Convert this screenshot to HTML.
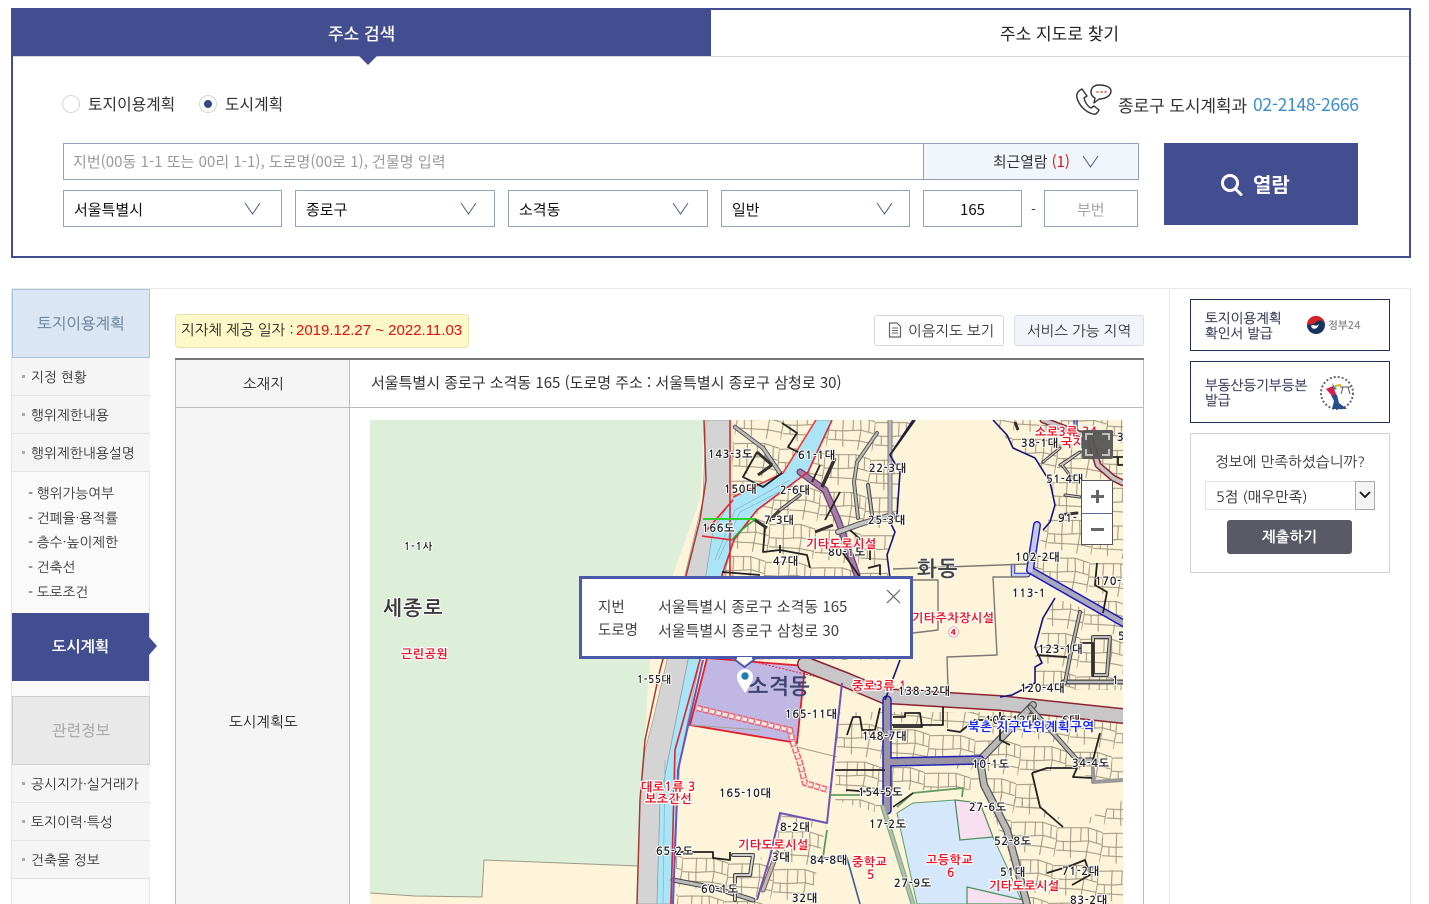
<!DOCTYPE html>
<html lang="ko"><head><meta charset="utf-8"><title>토지이음</title>
<style>
html,body{margin:0;padding:0;background:#fff}
body{width:1429px;height:904px;overflow:hidden;position:relative;font-family:"Noto Sans CJK KR","Liberation Sans",sans-serif;color:#222}
.a{position:absolute;box-sizing:border-box}
.t{position:absolute;white-space:nowrap}
.f{border:1px solid #8fa3bd;background:#fff}
.s{font-family:"NanumGothic","Noto Sans CJK KR",sans-serif}
.mi{position:absolute;left:12px;width:138px;height:38px;background:#f5f5f5;border-bottom:1px solid #e2e2e2;box-sizing:border-box;font:13.8px/39px "NanumGothic",sans-serif;color:#333;padding-left:19px;white-space:nowrap}
.mi:before{content:"";position:absolute;left:10px;top:17px;width:3px;height:3px;background:#aaa}
.su{position:absolute;left:28px;font:13.7px/20px "NanumGothic",sans-serif;color:#333;white-space:nowrap}
svg text{font-family:"NanumGothic","Noto Sans CJK KR",sans-serif;paint-order:stroke;stroke-linejoin:round}
.n{font-size:11px;font-weight:700;fill:#222;stroke:#fff;stroke-width:2px;letter-spacing:.7px}
.r{font-size:12px;font-weight:700;fill:#ee1122;stroke:#fff;stroke-width:2.5px;letter-spacing:.5px}
.b{font-size:12px;font-weight:700;fill:#1122ee;stroke:#fff;stroke-width:2.5px;letter-spacing:.5px}
</style></head><body>

<!-- search box -->
<div class="a" style="left:11px;top:8px;width:1400px;height:250px;border:2px solid #434e91"></div>
<div class="a" style="left:11px;top:8px;width:700px;height:48px;background:#434e91"></div>
<div class="a" style="left:711px;top:56px;width:698px;height:1px;background:#d4d4d4"></div>
<div class="a" style="left:13px;top:56px;width:698px;height:1px;background:#d4d4d4"></div>
<svg class="a" style="left:359px;top:56px" width="18" height="10"><path d="M0 0H18L9 9Z" fill="#434e91"/></svg>
<div class="t" style="left:328px;top:21px;font-size:17px;line-height:24px;color:#fff;font-weight:500">주소 검색</div>
<div class="t" style="left:1000px;top:21px;font-size:17px;line-height:24px;color:#222">주소 지도로 찾기</div>

<svg class="a" style="left:60px;top:92px" width="160" height="24"><circle cx="11" cy="12" r="8.500" fill="#fff" stroke="#d6d6d6"/><circle cx="148" cy="12" r="8.500" fill="#fff" stroke="#d6d6d6"/><circle cx="148" cy="12" r="4" fill="#2f4b85"/></svg>
<div class="t" style="left:88px;top:93px;font-size:15.800px;line-height:22px;color:#333">토지이용계획</div>
<div class="t" style="left:225px;top:93px;font-size:15.800px;line-height:22px;color:#333">도시계획</div>

<svg class="a" style="left:1074px;top:83px" width="40" height="34" fill="none" stroke="#333" stroke-width="1.400" stroke-linecap="round" stroke-linejoin="round">
<path d="M8 6C4 8 2 11 3 15C5 22 11 29 19 31C22 32 24 29 25 27L20 23L17 25C13 23 11 19 10 15L13 13L8 6Z"/>
<path d="M25 2C20 2 17 5 17 9C17 12 19 14 21 15L20 20L25 16C31 16 37 13 37 8C37 4 31 2 25 2Z"/>
<path d="M23 9h1M27 9h1M31 9h1" stroke="#e0553a" stroke-width="1.600"/></svg>
<div class="t" style="left:1118px;top:92px;font-size:17px;line-height:25px;color:#333;letter-spacing:-.1px">종로구 도시계획과</div>
<div class="t" style="left:1253px;top:92px;font-size:17.500px;line-height:25px;color:#3b8ccb;letter-spacing:-.3px">02-2148-2666</div>

<div class="a f" style="left:63px;top:143px;width:1076px;height:37px"></div>
<div class="a" style="left:923px;top:143px;width:216px;height:37px;background:#f1f6fc;border:1px solid #8fa3bd"></div>
<div class="t" style="left:73px;top:151px;font-size:15px;line-height:22px;color:#9a9a9a;letter-spacing:.03px">지번(00동 1-1 또는 00리 1-1), 도로명(00로 1), 건물명 입력</div>
<div class="t" style="left:993px;top:151px;font-size:14.800px;line-height:22px;color:#333">최근열람 <span style="color:#d11">(1)</span></div>

<div class="a f" style="left:63px;top:190px;width:219px;height:37px"></div>
<div class="a f" style="left:295px;top:190px;width:200px;height:37px"></div>
<div class="a f" style="left:508px;top:190px;width:200px;height:37px"></div>
<div class="a f" style="left:721px;top:190px;width:189px;height:37px"></div>
<div class="a f" style="left:923px;top:190px;width:99px;height:37px"></div>
<div class="a f" style="left:1044px;top:190px;width:94px;height:37px"></div>
<div class="t" style="left:74px;top:199px;font-size:15px;line-height:22px;color:#111">서울특별시</div>
<div class="t" style="left:306px;top:199px;font-size:15px;line-height:22px;color:#111">종로구</div>
<div class="t" style="left:519px;top:199px;font-size:15px;line-height:22px;color:#111">소격동</div>
<div class="t" style="left:732px;top:199px;font-size:15px;line-height:22px;color:#111">일반</div>
<div class="t" style="left:960px;top:199px;font-size:15px;line-height:22px;color:#111">165</div>
<div class="t" style="left:1031px;top:199px;font-size:14px;line-height:22px;color:#444">-</div>
<div class="t" style="left:1077px;top:199px;font-size:15px;line-height:22px;color:#a5a5a5">부번</div>
<svg class="a" style="left:0;top:0" width="1429" height="240" fill="none" stroke="#4a5d7c" stroke-width="1"><path d="M245 203l7.500 11 7.500-11M461 203l7.500 11 7.500-11M673 203l7.500 11 7.500-11M877 203l7.500 11 7.500-11M1083 156l7.500 11 7.500-11"/></svg>

<div class="a" style="left:1164px;top:143px;width:194px;height:82px;background:#434e91"></div>
<svg class="a" style="left:1219px;top:172px" width="26" height="26" fill="none" stroke="#fff" stroke-width="3" stroke-linecap="round"><circle cx="11" cy="11" r="7.500"/><path d="M16.500 17l5.500 5.500"/></svg>
<div class="t" style="left:1253px;top:170px;font-size:20px;line-height:28px;color:#fff;font-weight:700">열람</div>

<!-- frame -->
<div class="a" style="left:12px;top:288px;width:1399px;height:1px;background:#e8e8e8"></div>
<div class="a" style="left:1169px;top:288px;width:1px;height:616px;background:#e8e8e8"></div>
<div class="a" style="left:1410px;top:288px;width:1px;height:616px;background:#e8e8e8"></div>

<!-- sidebar -->
<div class="a" style="left:11px;top:289px;width:1px;height:615px;background:#e4e4e4"></div>
<div class="a" style="left:12px;top:289px;width:138px;height:615px;background:#fafafa;border-right:1px solid #e4e4e4"></div>
<div class="a s" style="left:12px;top:289px;width:138px;height:69px;background:#dae6f3;border:1px solid #a9c4e0;text-align:center;font-size:15.500px;line-height:69px;color:#6d88a3;-webkit-text-stroke:.2px #6d88a3">토지이용계획</div>
<div class="mi" style="top:358px">지정 현황</div>
<div class="mi" style="top:396px">행위제한내용</div>
<div class="mi" style="top:434px">행위제한내용설명</div>
<div class="su" style="top:483px">- 행위가능여부</div>
<div class="su" style="top:508px">- 건폐율·용적률</div>
<div class="su" style="top:532px">- 층수·높이제한</div>
<div class="su" style="top:557px">- 건축선</div>
<div class="su" style="top:582px">- 도로조건</div>
<div class="a s" style="left:12px;top:613px;width:137px;height:68px;background:#434e91;text-align:center;font-size:15.200px;line-height:69px;color:#fff;font-weight:700">도시계획</div>
<svg class="a" style="left:149px;top:636px" width="10" height="20"><path d="M0 1L8 10L0 19Z" fill="#434e91"/></svg>
<div class="a s" style="left:12px;top:696px;width:138px;height:69px;background:#e9e9e9;border:1px solid #cfcfcf;text-align:center;font-size:15.500px;line-height:69px;color:#a9a9a9;-webkit-text-stroke:.2px #a9a9a9">관련정보</div>
<div class="mi" style="top:765px">공시지가·실거래가</div>
<div class="mi" style="top:803px">토지이력·특성</div>
<div class="mi" style="top:841px">건축물 정보</div>

<!-- content head -->
<div class="a s" style="left:175px;top:314px;width:294px;height:34px;background:#fff8c9;border:1px solid #e9dfa8;border-radius:4px"></div>
<div class="t s" style="left:181px;top:320px;font-size:14.600px;line-height:22px;color:#222">지자체 제공 일자 :</div>
<div class="t" style="left:296px;top:320px;font:15px/22px 'Liberation Sans',sans-serif;color:#e01010">2019.12.27 ~ 2022.11.03</div>
<div class="a" style="left:874px;top:315px;width:130px;height:31px;border:1px solid #d6d6d6;border-radius:3px;background:#fff"></div>
<svg class="a" style="left:888px;top:322px" width="14" height="16" fill="none" stroke="#666" stroke-width="1.200"><path d="M1.500 1H9L12.500 4.500V15H1.500Z"/><path d="M4 6h6M4 8.500h6M4 11h6" stroke-width="1"/></svg>
<div class="t s" style="left:908px;top:321px;font-size:14.600px;line-height:22px;color:#333">이음지도 보기</div>
<div class="a s" style="left:1014px;top:315px;width:130px;height:31px;border:1px solid #d6dde6;border-radius:3px;background:#f1f5fb;font-size:14.600px;line-height:32px;color:#333;text-align:center">서비스 가능 지역</div>

<!-- table -->
<div class="a" style="left:175px;top:358px;width:969px;height:2px;background:#777"></div>
<div class="a" style="left:175px;top:360px;width:175px;height:544px;background:#f5f5f5;border-left:1px solid #bbb;border-right:1px solid #bbb"></div>
<div class="a" style="left:1143px;top:360px;width:1px;height:544px;background:#bbb"></div>
<div class="a" style="left:175px;top:407px;width:969px;height:1px;background:#bbb"></div>
<div class="t s" style="left:243px;top:374px;font-size:14.500px;line-height:22px;color:#222">소재지</div>
<div class="t s" style="left:229px;top:712px;font-size:14.600px;line-height:22px;color:#222">도시계획도</div>
<div class="t" style="left:371px;top:372px;font-size:15px;line-height:22px;color:#333">서울특별시 종로구 소격동 165 (도로명 주소 : 서울특별시 종로구 삼청로 30)</div>

<!-- map -->
<svg class="a" style="left:370px;top:420px" width="753" height="484" viewBox="370 420 753 484">
<defs>
<pattern id="m" width="46" height="38" patternUnits="userSpaceOnUse" patternTransform="rotate(7)">
<path d="M0 9L14 7L15 21L1 22ZM14 7L31 5L33 18L15 21ZM31 5L46 8M33 18L46 20M15 21L17 37M33 18L32 38M1 22L0 38M2 31L32 29M32 29L46 30M24 6L25 19M40 7L41 19M8 22L9 31" fill="none" stroke="#9c9380" stroke-width="1"/>
</pattern>
</defs>
<rect x="370" y="420" width="753" height="484" fill="#fef4d9"/>
<path d="M370 420H705L700 500L672 577L650 660L645 730L640 800L638 866L484 860L482 897L415 896L370 893Z" fill="#ddeed9"/>
<path d="M638 866L484 860L482 897L415 896L370 893" fill="none" stroke="#9c9a86"/>

<!-- mesh zones -->
<g fill="url(#m)">
<path d="M733 420H815L786 470L735 500L730 530Z"/>
<path d="M832 420H913L890 455L900 472L897 515L890 522L895 532L887 555L892 660H690L712 575L732 535L750 510L805 470Z"/>
<path d="M993 420H1123V623L1033 572L1043 530L1055 505L1050 482L1035 458L1013 448Z"/>
<path d="M1055 598L1123 623V690H1035L1035 650Z"/>
<path d="M838 712H1123V780L1093 783L1077 767L1032 773L1040 807L1075 825L980 790H890L885 815L835 800Z"/>
<path d="M985 790L1040 807L1075 825L1123 800V904H1025Z"/>
<path d="M676 855L770 858L780 813L826 825L810 904H676Z"/>
</g>

<!-- gray road + river -->
<path d="M706 420L703 500L685 575L667 660L653 720L645 750L640 800L637 904H657L660 800L672 740L688 660L700 605L712 560L730 510L730 420Z" fill="#d5d4d4" stroke="#a09a90" stroke-width=".7"/>
<path d="M816 420H832L808 472L755 512L734 538L724 575L700 660L680 760L672 904H657L660 800L672 740L688 660L706 575L713 530L733 498L783 473Z" fill="#a9e5f6" stroke="#8c9aa8" stroke-width=".7"/>
<path d="M665 760L663 904M679 770L670 904M715 560L735 510L790 480M718 560L740 512L795 484" stroke="#7fb5c8" stroke-width=".7" fill="none"/>

<!-- school -->
<path d="M897 813L913 803L955 800L960 840L993 837L1007 867L1023 904H917Z" fill="#d5e7fa" stroke="#5d9a68" stroke-width="1"/>
<path d="M955 800L980 803L993 837L960 840Z" fill="#f9e0f1" stroke="#4a8f58" stroke-width="1.200"/>
<path d="M967 887L993 893L1023 900V904H967Z" fill="#f9e0f1" stroke="#4a8f58" stroke-width="1.200"/>

<!-- selected parcel -->
<path d="M707 658L805 666L797 743L690 725Z" fill="#c0b8e2" stroke="#e01f2f" stroke-width="1.800"/>
<path d="M805 666L842 683M755 662L842 683" stroke="#e01f2f" stroke-width="1" stroke-dasharray="2 1.500" fill="none"/>
<path d="M797 747L837 757M690 725L760 730" stroke="#a89f8b" fill="none"/>
<path d="M697 708L790 730L793 743L800 763L805 783L828 790" fill="none" stroke="#ea6676" stroke-width="6.500" stroke-dasharray="5.500 1.200"/>
<path d="M697 708L790 730L793 743L800 763L805 783L828 790" fill="none" stroke="#fbe9dc" stroke-width="3.500" stroke-dasharray="4.500 2.200"/>

<!-- roads -->
<g fill="none" stroke-linejoin="round" stroke-linecap="round">
<path d="M805 664L846 680L884 696L1000 703L1123 716" stroke="#8c2334" stroke-width="16"/>
<path d="M805 664L846 680L884 696L1000 703L1123 716" stroke="#c8c6c6" stroke-width="13"/>
<path d="M1033 705L980 760L984 785L1007 830L1027 904" stroke="#555" stroke-width="8"/>
<path d="M1033 705L980 760L984 785L1007 830L1027 904" stroke="#b9b9b9" stroke-width="5.500"/>
<path d="M1030 707L1077 760H1093" stroke="#444" stroke-width="5"/><path d="M1030 707L1077 760H1093" stroke="#b5b5b5" stroke-width="3"/>
<path d="M1093 762V782L1123 780" stroke="#999" stroke-width="4"/>
<path d="M1063 682H1123" stroke="#444" stroke-width="5"/><path d="M1063 682H1123" stroke="#bbb" stroke-width="2.500"/>
<path d="M887 700V810M887 762L980 760" stroke="#2020b8" stroke-width="9.500" stroke-dasharray="2 .6"/>
<path d="M887 700V810M887 762L980 760" stroke="#9a94a4" stroke-width="6.500"/>
<path d="M883 807L913 904" stroke="#7fb07f" stroke-width="5"/><path d="M883 807L913 904" stroke="#bbb" stroke-width="2.500"/>
<path d="M800 472L825 490L838 520L857 575" stroke="#6d3f74" stroke-width="7"/><path d="M800 472L825 490L838 520L857 575" stroke="#a57ea8" stroke-width="4.500"/>
<path d="M838 532L860 524L892 515" stroke="#555" stroke-width="6"/><path d="M838 532L860 524L892 515" stroke="#c4c4c4" stroke-width="4"/>
<path d="M890 420V515" stroke="#777" stroke-width="5"/><path d="M890 420V515" stroke="#b9b9b9" stroke-width="3"/>
<path d="M735 427L763 448L780 473" stroke="#555" stroke-width="4.500"/><path d="M735 427L763 448L780 473" stroke="#bbb" stroke-width="2.500"/>
<path d="M877 433L857 462L854 482L858 518" stroke="#555" stroke-width="4"/><path d="M877 433L857 462L854 482L858 518" stroke="#bbb" stroke-width="2"/>
<path d="M868 485L872 515" stroke="#444" stroke-width="4"/><path d="M868 485L872 515" stroke="#bbb" stroke-width="2"/>
<path d="M800 495L780 510L770 520" stroke="#444" stroke-width="3.500"/><path d="M800 495L780 510" stroke="#bbb" stroke-width="1.500"/>
<path d="M1037 525L1030 570L1123 623" stroke="#1c1cc0" stroke-width="8" stroke-dasharray="1.800 .7"/>
<path d="M1037 525L1030 570L1123 623" stroke="#a9a9b9" stroke-width="5"/>
<path d="M1037 525L1030 570" stroke="#c5c9ea" stroke-width="5"/>
<path d="M1013 566V575H1028" stroke="#2233bb" stroke-width="4.500"/><path d="M1013 566V575H1028" stroke="#c5c9ea" stroke-width="2.500"/>
<path d="M1043 420L1090 438L1098 465L1113 478L1123 483" stroke="#8c2334" stroke-width="7"/><path d="M1043 420L1090 438L1098 465L1113 478L1123 483" stroke="#c5c3c3" stroke-width="4"/>
<path d="M1043 462L1060 448M1060 465L1080 452L1062 465L1072 478M1065 495L1080 497M1060 515L1077 513" stroke="#333" stroke-width="3"/>
<path d="M1043 462L1060 448M1060 465L1080 452L1062 465L1072 478M1065 495L1080 497" stroke="#ccc" stroke-width="1.200"/>
<path d="M1080 612L1070 657L1065 683" stroke="#444" stroke-width="4"/><path d="M1080 612L1070 657L1065 683" stroke="#bbb" stroke-width="2"/>
<path d="M1093 637H1110L1107 675H1093Z" stroke="#444" stroke-width="4"/><path d="M1093 637H1110L1107 675H1093Z" stroke="#bbb" stroke-width="2"/>
<path d="M673 880L715 888L753 900" stroke="#444" stroke-width="5"/><path d="M673 880L715 888L753 900" stroke="#bbb" stroke-width="3"/>
<path d="M777 853L763 890" stroke="#854" stroke-width="5"/><path d="M777 853L763 890" stroke="#bbb" stroke-width="3"/>
<path d="M733 855H753L750 875H735V900" stroke="#444" stroke-width="4"/><path d="M733 855H753L750 875H735V900" stroke="#ddd" stroke-width="1.800"/>
</g>

<!-- thin lines -->
<g fill="none" stroke-width="1.600" stroke-linejoin="round">
<path d="M730 420V585M702 536L732 540M705 532L733 500" stroke="#e8242c"/>
<path d="M704 420L706 480L700 520L685 580L660 670L645 740L640 800L637 904" stroke="#a63b33" stroke-width="1.500"/>
<path d="M832 420L808 472L757 510L734 540L722 575L700 660L675 750L671 904" stroke="#d82838"/>
<path d="M816 420L783 473L733 497" stroke="#ee3838"/>
<path d="M703 519H756" stroke="#2ed12e" stroke-width="2"/>
<path d="M756 519Q740 530 732 540" stroke="#2ea02e"/>
<path d="M842 683L827 823L780 813L770 857L757 900M703 660L678 770L673 904" stroke="#6e55b5" stroke-width="2"/>
<path d="M913 420L890 455L900 472L897 515L890 522L895 532L887 555L890 578M900 660L885 700" stroke="#141478"/>
<path d="M993 420L1007 435L1013 448L1035 458L1050 482L1055 505L1050 522L1043 530M1055 598L1043 618L1035 647L1042 663L1035 667V683L1012 695L1000 697" stroke="#141478"/>
<path d="M1074 420V435M1077 420V435" stroke="#2233bb" stroke-width="1.200"/>
<path d="M893 569L1027 564M913 580H938V630L913 633M1027 577H993L997 655L947 657L948 687" stroke="#7a7a76" stroke-width="1.400"/>
<path d="M830 795H863M897 807L913 793L963 788L962 797M827 830L823 857" stroke="#5f9a5f" stroke-width="1.800"/>
<path d="M893 807L913 793" stroke="#222" stroke-width="1.500"/>
<path d="M823 858H847L860 904" stroke="#3c5e96" stroke-width="1.600"/>
<path d="M757 452L743 477L763 487L782 473M782 423L797 433L788 447L800 453M835 458L822 487M820 465L812 482M765 528L763 552L780 550L807 555L810 568M780 545V553M850 530L870 548V560M868 568L880 565V575M722 572L760 575M1097 563L1095 585L1107 592L1103 613M1037 655L1067 657M1080 643H1093V677M847 735L853 717H860L862 730H875L880 708M893 717H905V713H920L922 727H893M892 725H943V707M947 730L960 732L975 720H1000M1032 773L1047 768H1077L1073 777L1092 778M1032 773L1040 807L1063 827M1100 733L1093 760M1000 712V740L1010 745M675 852H713V858L730 860V852M840 492L825 520M838 546L862 580M1113 457H1123M1118 457V465H1123M1015 422L1018 430M915 420L890 455M835 770H885M846 790L885 793M1047 873L1070 866L1085 860L1090 875L1072 885" stroke="#222" stroke-width="1.800"/>
<path d="M757 452L772 465M758 475L772 465M755 520L767 528M815 532L833 525M1015 422L1018 430" stroke="#333" stroke-width="3"/>
<path d="M835 458L822 487" stroke="#333" stroke-width="3.500"/>
</g>

<!-- labels -->
<text x="404" y="550" class="n" style="font-size:10px;letter-spacing:1px">1-1사</text>
<text x="383" y="615" font-size="20" font-weight="700" fill="#3a3a3a" stroke="#fff" stroke-width="2" letter-spacing="1.500">세종로</text>
<text x="401" y="658" class="r">근린공원</text>
<text x="637" y="683" class="n" style="font-size:10px">1-55대</text>
<text x="708" y="458" class="n">143-3도</text>
<text x="798" y="459" class="n">61-1대</text>
<text x="869" y="472" class="n">22-3대</text>
<text x="724" y="493" class="n">150대</text>
<text x="780" y="494" class="n">2-6대</text>
<text x="702" y="532" class="n">166도</text>
<text x="764" y="524" class="n">7-3대</text>
<text x="868" y="524" class="n">25-3대</text>
<text x="773" y="565" class="n">47대</text>
<text x="828" y="556" class="n">80-1도</text>
<text x="806" y="548" class="r">기타도로시설</text>
<text x="917" y="576" font-size="21" font-weight="700" fill="#444" stroke="#fff" stroke-width="1.500" letter-spacing="1">화동</text>
<text x="1015" y="561" class="n">102-2대</text>
<text x="1012" y="597" class="n">113-1</text>
<text x="1095" y="585" class="n">170-3</text>
<text x="1038" y="653" class="n">123-1대</text>
<text x="1020" y="692" class="n">120-4대</text>
<text x="1046" y="483" class="n">51-4대</text>
<text x="1021" y="447" class="n">38-1대</text>
<text x="1058" y="522" class="n">91-</text>
<text x="1117" y="441" class="n">3</text>
<text x="1035" y="436" class="r">소로3류 34</text>
<text x="1061" y="447" class="r">국지</text>
<text x="912" y="622" class="r">기타주차장시설</text>
<text x="948" y="636" class="r" style="font-size:11px">④</text>
<text x="852" y="690" class="r">중로3류 1</text>
<text x="898" y="695" class="n">138-32대</text>
<text x="985" y="724" class="n">106-12대</text>
<text x="1062" y="724" class="n">6대</text>
<text x="968" y="731" class="b" style="font-size:12.500px">북촌 지구단위계획구역</text>
<text x="785" y="718" class="n">165-11대</text>
<text x="862" y="740" class="n">148-7대</text>
<text x="972" y="768" class="n">10-1도</text>
<text x="1072" y="767" class="n">34-4도</text>
<text x="858" y="796" class="n">154-5도</text>
<text x="719" y="797" class="n">165-10대</text>
<text x="969" y="811" class="n">27-6도</text>
<text x="869" y="828" class="n">17-2도</text>
<text x="994" y="845" class="n">52-8도</text>
<text x="641" y="791" class="r">대로1류 3</text>
<text x="645" y="803" class="r">보조간선</text>
<text x="780" y="831" class="n">8-2대</text>
<text x="656" y="855" class="n">65-2도</text>
<text x="738" y="849" class="r">기타도로시설</text>
<text x="772" y="861" class="n">3대</text>
<text x="810" y="864" class="n">84-8대</text>
<text x="852" y="866" class="r">중학교</text>
<text x="867" y="879" class="r">5</text>
<text x="926" y="864" class="r">고등학교</text>
<text x="947" y="877" class="r">6</text>
<text x="894" y="887" class="n">27-9도</text>
<text x="1000" y="876" class="n">51대</text>
<text x="1062" y="875" class="n">71-2대</text>
<text x="989" y="890" class="r">기타도로시설</text>
<text x="701" y="893" class="n">60-1도</text>
<text x="792" y="902" class="n">32대</text>
<text x="1070" y="904" class="n">83-2대</text>
<text x="1112" y="684" class="n">1</text>
<text x="1118" y="640" class="n">5</text>
</svg>

<!-- map controls -->
<div class="a" style="left:1082px;top:430px;width:31px;height:29px;background:#555;border-radius:2px;opacity:.95"></div>
<svg class="a" style="left:1082px;top:430px" width="31" height="29" fill="none" stroke="#ccc" stroke-width="1.800"><path d="M4 10V4H11M20 4H27V10M27 19V25H20M11 25H4V19"/></svg>
<div class="a" style="left:1081px;top:480px;width:32px;height:65px;background:#fff;border:1px solid #555"></div>
<div class="a" style="left:1082px;top:513px;width:30px;height:1px;background:#5a6a96"></div>
<svg class="a" style="left:1081px;top:480px" width="32" height="65" fill="#666"><rect x="10" y="15" width="13" height="3"/><rect x="15" y="10" width="3" height="13"/><rect x="10" y="48" width="13" height="3"/></svg>

<!-- popup -->
<div class="a" style="left:579px;top:576px;width:334px;height:83px;background:#fff;border:3px solid #4a59a9"></div>
<svg class="a" style="left:733px;top:657px" width="24" height="12"><path d="M1 2L11.500 10L22 2" fill="#fff" stroke="#4a59a9" stroke-width="2"/><rect x="4" y="0" width="15" height="2.500" fill="#fff"/></svg>
<div class="t" style="left:598px;top:597px;font-size:14.500px;line-height:20px;color:#444">지번</div>
<div class="t" style="left:598px;top:620px;font-size:14.500px;line-height:20px;color:#444">도로명</div>
<div class="t" style="left:658px;top:597px;font-size:15px;line-height:20px;color:#444">서울특별시 종로구 소격동 165</div>
<div class="t" style="left:658px;top:621px;font-size:15px;line-height:20px;color:#444">서울특별시 종로구 삼청로 30</div>
<svg class="a" style="left:885px;top:588px" width="17" height="17" stroke="#666" stroke-width="1.200"><path d="M2 2L15 15M15 2L2 15"/></svg>
<svg class="a" style="left:736px;top:668px" width="18" height="26"><path d="M9 25C5 18 1 14 1 9A8 8 0 0 1 17 9C17 14 13 18 9 25Z" fill="#fff"/><circle cx="9" cy="8" r="3.700" fill="#1f7fb5"/></svg>
<div class="t" style="left:748px;top:674px;font-size:21.500px;line-height:28px;font-weight:700;color:#3e4370;font-family:'NanumGothic',sans-serif;letter-spacing:.5px">소격동</div>

<!-- right column -->
<div class="a" style="left:1190px;top:299px;width:200px;height:52px;border:1px solid #1f3158"></div>
<div class="t s" style="left:1205px;top:311px;font-size:13.600px;line-height:15px;color:#3a3a5a;-webkit-text-stroke:.2px #3a3a5a">토지이용계획<br>확인서 발급</div>
<svg class="a" style="left:1306px;top:315px" width="20" height="20"><circle cx="10" cy="10" r="9" fill="#17335f"/><path d="M1 10A9 9 0 0 1 19 10C18 5 13 4 10 7C7 10 3 9 1 10Z" fill="#d8222a"/><path d="M5 11C7 8 10 13 13 9C12 13 9 15 6 13Z" fill="#fff"/></svg>
<div class="t s" style="left:1328px;top:319px;font-size:10.500px;line-height:14px;color:#8a8a8a;font-weight:700">정부24</div>

<div class="a" style="left:1190px;top:361px;width:200px;height:62px;border:1px solid #1f3158"></div>
<div class="t s" style="left:1205px;top:378px;font-size:13.600px;line-height:15px;color:#3a3a5a;-webkit-text-stroke:.2px #3a3a5a">부동산등기부등본<br>발급</div>
<svg class="a" style="left:1319px;top:375px" width="38" height="36"><circle cx="18" cy="18" r="16" fill="none" stroke="#666" stroke-width="2" stroke-dasharray="2 2"/><path d="M12 15L18 20L20 28L28 34H13L15 26L12 20Z" fill="#254e8c"/><path d="M7 14L14 11L17 19L13 21Z" fill="#d41e54"/><path d="M13 8L18 14L15 15Z" fill="#3e9a6a"/><path d="M16 11L22 10" stroke="#e0b020" stroke-width="2"/><path d="M21 12H32M24 12L22 19M29 12L31 19" stroke="#555" fill="none"/></svg>

<div class="a" style="left:1190px;top:433px;width:200px;height:140px;border:1px solid #d2d2d2"></div>
<div class="t s" style="left:1215px;top:453px;font-size:14.700px;line-height:20px;color:#333">정보에 만족하셨습니까?</div>
<div class="a" style="left:1205px;top:481px;width:170px;height:29px;border:1px solid #e4e4e4;background:#fff"></div>
<div class="a" style="left:1355px;top:481px;width:20px;height:29px;border:1px solid #aaa;background:#f4f4f4"></div>
<svg class="a" style="left:1358px;top:490px" width="14" height="10" fill="none" stroke="#111" stroke-width="1.800"><path d="M2 2L7 7L12 2"/></svg>
<div class="t s" style="left:1216px;top:487px;font-size:14.500px;line-height:22px;color:#222">5점 (매우만족)</div>
<div class="a s" style="left:1227px;top:520px;width:125px;height:34px;background:#5a5a66;border-radius:3px;text-align:center;font-size:14.700px;line-height:37px;color:#fff;font-weight:700">제출하기</div>
</body></html>
